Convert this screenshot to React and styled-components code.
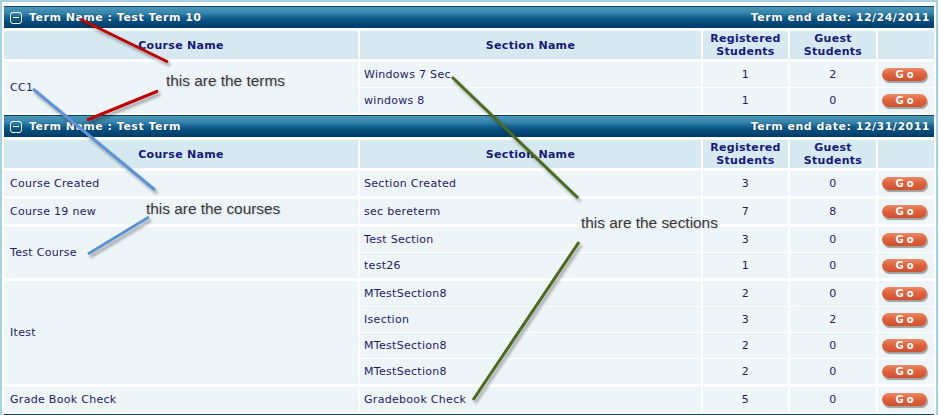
import React from "react";
import styled, { createGlobalStyle } from "styled-components";

const Global = createGlobalStyle`
  html, body {
    margin: 0;
    background: #fff;
    overflow: hidden;
  }
  body {
    font-family: "DejaVu Sans", Verdana, sans-serif;
    font-size: 11px;
    color: #1e1a6a;
  }
`;

const Frame = styled.div`
  position: relative;
  width: 938px;
  box-sizing: border-box;
  border: 2px solid #a7d1e3;
  border-bottom: none;
  height: 415px;
`;

const TermBar = styled.div`
  display: flex;
  align-items: center;
  justify-content: space-between;
  height: 22px;
  margin: ${(p) => (p.$first ? "4px" : "0")} 2px 0;
  padding: 0 4px 0 6px;
  box-sizing: border-box;
  border-top: 1px solid #0c4468;
  background: linear-gradient(
    to bottom,
    #4b97b9 0%,
    #3584aa 30%,
    #136091 50%,
    #064d7c 70%,
    #013b68 100%
  );
  color: #fff;
  font-weight: bold;
  font-size: 11px;
  letter-spacing: 0.5px;
  text-shadow: 0 0 1px #012a4a;
`;

const TermTitle = styled.div`
  display: flex;
  align-items: center;
  gap: 7px;
`;

const Collapse = styled.span`
  display: flex;
  align-items: center;
  justify-content: center;
  width: 10px;
  height: 10px;
  border: 1.5px solid #fff;
  border-radius: 3px;
  &::after {
    content: "";
    width: 6px;
    height: 1.5px;
    background: #fff;
  }
`;

const Grid = styled.table`
  width: 100%;
  table-layout: fixed;
  border-collapse: separate;
  border-spacing: 2px 1px;
  margin: 2px 0 1px;
`;

const Head = styled.th`
  height: 28px;
  padding: 0 4px;
  border-bottom: 2px solid #fff;
  background: #d6e9f1;
  color: #15197a;
  font-weight: bold;
  font-size: 11px;
  line-height: 13px;
  letter-spacing: 0.3px;
  text-align: center;
  vertical-align: middle;
`;

const Cell = styled.td`
  height: 25px;
  padding: 0 ${(p) => (p.$wide ? "6px" : "4px")};
  border-top: ${(p) => (p.$groupStart ? "2px solid #fff" : "none")};
  background: #edf5f8;
  letter-spacing: 0.3px;
  text-align: ${(p) => (p.$center ? "center" : "left")};
  vertical-align: middle;
  white-space: nowrap;
`;

const GoButton = styled.button`
  display: inline-flex;
  align-items: center;
  justify-content: center;
  width: 45px;
  height: 13px;
  margin-right: 3px;
  padding: 0 0 0 3px;
  border: none;
  border-radius: 7px;
  background: linear-gradient(to bottom, #ec8a68 0%, #e0643f 45%, #cf502d 100%);
  box-shadow: 1px 2px 1px rgba(90, 90, 90, 0.55);
  color: #fff;
  font-family: "DejaVu Sans", Verdana, sans-serif;
  font-weight: bold;
  font-size: 10px;
  letter-spacing: 3px;
  line-height: 13px;
  cursor: pointer;
`;

const Footer = styled.div`
  height: 3px;
  margin: 0 2px;
  background: #0c4468;
`;

const Overlay = styled.svg`
  position: absolute;
  left: -2px;
  top: -2px;
  width: 939px;
  height: 415px;
  pointer-events: none;
  overflow: visible;
`;

const Note = styled.div`
  position: absolute;
  left: ${(p) => p.$x - 2}px;
  top: ${(p) => p.$y - 2}px;
  font-family: "Liberation Sans", Arial, sans-serif;
  font-size: 15.4px;
  color: #383838;
  text-shadow: 1px 1px 2px rgba(0, 0, 0, 0.15);
  white-space: nowrap;
  pointer-events: none;
`;

const terms = [
  {
    name: "Test Term 10",
    end: "12/24/2011",
    courses: [
      { name: "CC1", sections: [["Windows 7 Sec", 1, 2], ["windows 8", 1, 0]] },
    ],
  },
  {
    name: "Test Term",
    end: "12/31/2011",
    courses: [
      { name: "Course Created", sections: [["Section Created", 3, 0]] },
      { name: "Course 19 new", sections: [["sec bereterm", 7, 8]] },
      { name: "Test Course", sections: [["Test Section", 3, 0], ["test26", 1, 0]] },
      {
        name: "Itest",
        sections: [
          ["MTestSection8", 2, 0],
          ["Isection", 3, 2],
          ["MTestSection8", 2, 0],
          ["MTestSection8", 2, 0],
        ],
      },
      { name: "Grade Book Check", sections: [["Gradebook Check", 5, 0]] },
    ],
  },
];

const lines = [
  { color: "#c00000", x1: 80, y1: 19, x2: 168, y2: 62 },
  { color: "#c00000", x1: 158, y1: 91, x2: 87, y2: 120 },
  { color: "#5f92d4", x1: 33, y1: 89, x2: 155, y2: 190 },
  { color: "#5f92d4", x1: 149, y1: 217, x2: 88, y2: 254 },
  { color: "#4b6a1f", x1: 452, y1: 77, x2: 578, y2: 198 },
  { color: "#4b6a1f", x1: 579, y1: 242, x2: 473, y2: 400 },
];

function TermTable({ term, first }) {
  return (
    <>
      <TermBar $first={first}>
        <TermTitle>
          <Collapse />
          Term Name : {term.name}
        </TermTitle>
        <span>Term end date: {term.end}</span>
      </TermBar>
      <Grid>
        <colgroup>
          <col style={{ width: 354 }} />
          <col style={{ width: 341 }} />
          <col style={{ width: 85 }} />
          <col style={{ width: 86 }} />
          <col style={{ width: 56 }} />
        </colgroup>
        <thead>
          <tr>
            <Head>Course Name</Head>
            <Head>Section Name</Head>
            <Head>
              Registered
              <br />
              Students
            </Head>
            <Head>
              Guest
              <br />
              Students
            </Head>
            <Head />
          </tr>
        </thead>
        <tbody>
          {term.courses.map((course, ci) =>
            course.sections.map(([section, reg, guest], si) => {
              const start = si === 0 && ci > 0;
              return (
                <tr key={course.name + si}>
                  {si === 0 && (
                    <Cell $wide $groupStart={start} rowSpan={course.sections.length}>
                      {course.name}
                    </Cell>
                  )}
                  <Cell $groupStart={start}>{section}</Cell>
                  <Cell $center $groupStart={start}>{reg}</Cell>
                  <Cell $center $groupStart={start}>{guest}</Cell>
                  <Cell $center $groupStart={start}>
                    <GoButton>Go</GoButton>
                  </Cell>
                </tr>
              );
            })
          )}
        </tbody>
      </Grid>
    </>
  );
}

export default function App() {
  return (
    <>
      <Global />
      <Frame>
        {terms.map((t, i) => (
          <TermTable key={t.name} term={t} first={i === 0} />
        ))}
        <Footer />

        <Overlay viewBox="0 0 939 415">
          <defs>
            <filter id="drop" x="-20%" y="-20%" width="140%" height="140%">
              <feDropShadow dx="2" dy="3" stdDeviation="1.5" floodColor="#000" floodOpacity="0.35" />
            </filter>
          </defs>
          {lines.map((l, i) => (
            <line
              key={i}
              x1={l.x1}
              y1={l.y1}
              x2={l.x2}
              y2={l.y2}
              stroke={l.color}
              strokeWidth="3"
              filter="url(#drop)"
            />
          ))}
        </Overlay>
        <Note $x={166} $y={72}>this are the terms</Note>
        <Note $x={146} $y={200}>this are the courses</Note>
        <Note $x={581} $y={214}>this are the sections</Note>
      </Frame>
    </>
  );
}
